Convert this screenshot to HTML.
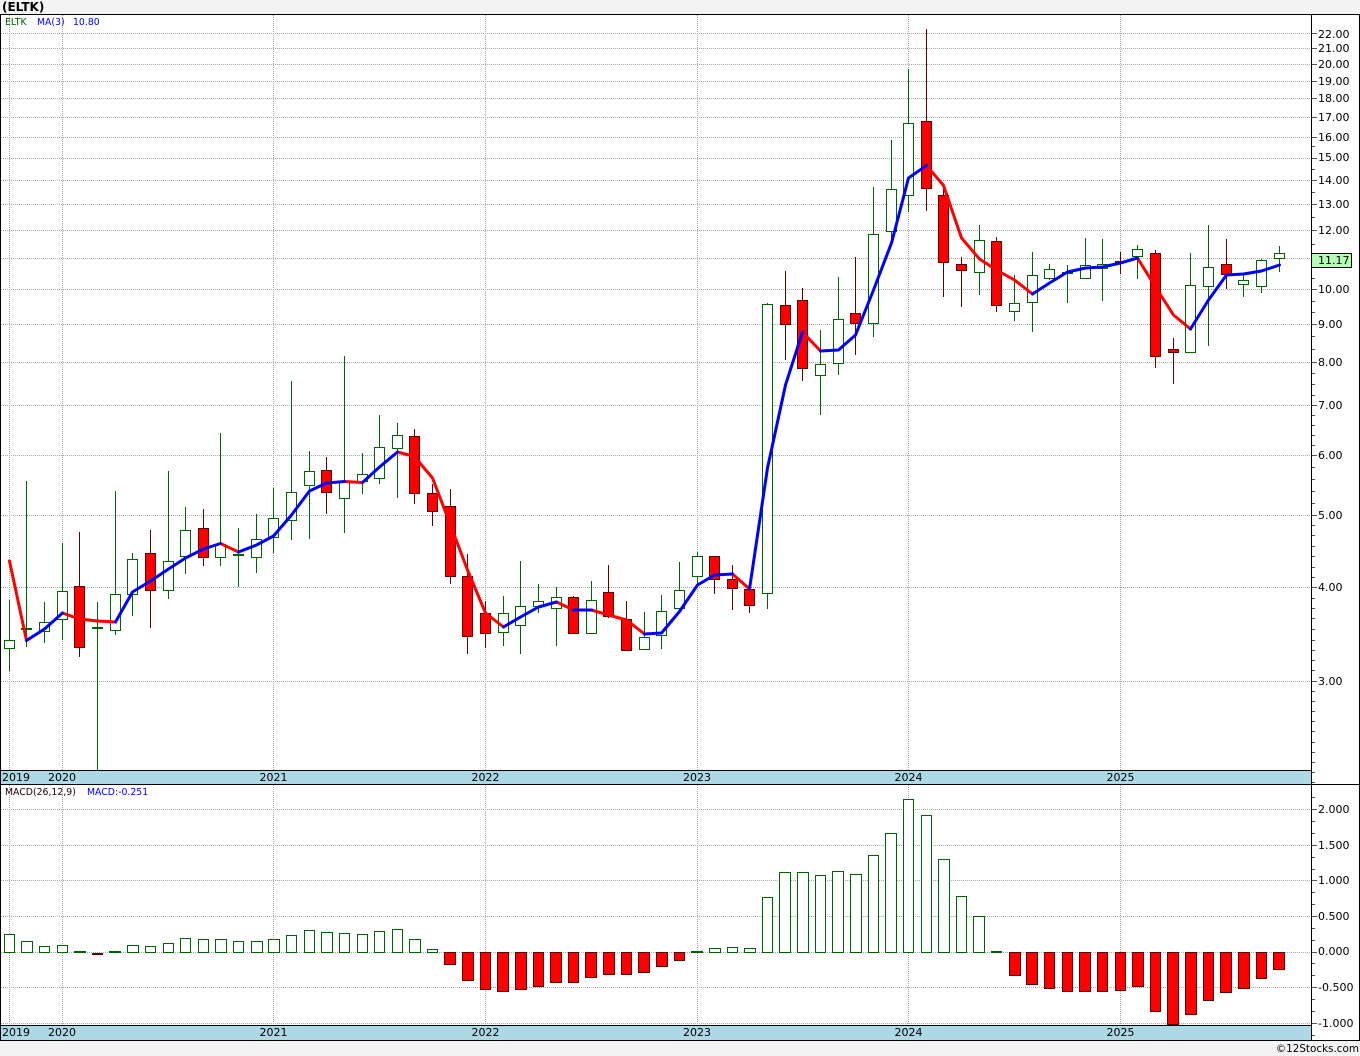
<!DOCTYPE html>
<html><head><meta charset="utf-8"><title>ELTK</title>
<style>
html,body{margin:0;padding:0;background:#f3f3f3;width:1360px;height:1056px;overflow:hidden}
svg{display:block}
text{font-family:"DejaVu Sans","Liberation Sans",sans-serif;fill:#000}
.ax{font-size:11px}
.sm{font-size:9.33px}
</style></head><body>
<svg width="1360" height="1056" viewBox="0 0 1360 1056" xmlns="http://www.w3.org/2000/svg">
<rect width="1360" height="1056" fill="#f3f3f3"/>
<rect x="0" y="14" width="1360" height="1027" fill="#fff"/>
<g shape-rendering="crispEdges">
<!-- grid -->
<path fill="none" stroke="#a8a8a8" stroke-dasharray="1 1" d="M1 33.5H1311M1 48.5H1311M1 64.5H1311M1 81.5H1311M1 98.5H1311M1 117.5H1311M1 137.5H1311M1 158.5H1311M1 180.5H1311M1 204.5H1311M1 230.5H1311M1 258.5H1311M1 289.5H1311M1 324.5H1311M1 362.5H1311M1 405.5H1311M1 455.5H1311M1 515.5H1311M1 587.5H1311M1 681.5H1311M1 809.5H1311M1 845.5H1311M1 880.5H1311M1 916.5H1311M1 952.5H1311M1 987.5H1311M1 1023.5H1311M9.5 15V770M62.5 15V770M273.5 15V770M485.5 15V770M697.5 15V770M908.5 15V770M1120.5 15V770M9.5 785V1025M62.5 785V1025M273.5 785V1025M485.5 785V1025M697.5 785V1025M908.5 785V1025M1120.5 785V1025"/>
<!-- bands -->
<rect x="1" y="770" width="1310" height="14" fill="#add8e6"/>
<rect x="1" y="1025" width="1310" height="15" fill="#add8e6"/>
<!-- green wicks -->
<path fill="none" stroke="#006400" d="M9.5 600V671M44.5 602V643M62.5 543V640M115.5 491V635M132.5 553V616M168.5 471V599M185.5 507V574M220.5 433V566M256.5 514V573M273.5 488V553M291.5 381V540M309.5 451V539M344.5 356V533M362.5 453V494M379.5 415V484M397.5 423V498M503.5 596V646M520.5 561V654M538.5 584V613M556.5 587V646M591.5 581V633M644.5 612V637M661.5 595V649M679.5 562V610M697.5 552V585M767.5 303V609M820.5 330V415M838.5 277V375M873.5 187V337M891.5 140V245M908.5 69V212M979.5 225V295M1014.5 275V321M1032.5 252V332M1049.5 264V280M1085.5 238V279M1102.5 239V301M1137.5 245V279M1190.5 253V352M1208.5 225V346M1243.5 275V297M1261.5 259V293M1279.5 246V272M26.5 481V647M97.5 602V771M238.5 528V587M1067.5 265V303"/>
<!-- red wicks -->
<path fill="none" stroke="#600000" d="M79.5 532V657M150.5 530V628M203.5 509V566M326.5 457V514M414.5 429V504M432.5 484V526M450.5 489V584M467.5 554V654M485.5 601V648M573.5 596V633M608.5 565V618M626.5 601V650M714.5 556V594M732.5 565V610M749.5 588V613M785.5 271V360M802.5 288V381M855.5 257V355M926.5 29V211M943.5 187V297M961.5 257V307M996.5 237V312M1155.5 250V368M1173.5 338V384M1226.5 239V289M1120.5 252V274"/>
<!-- green bodies -->
<path fill="#fff" stroke="#006400" d="M4.5 640.5h10v8h-10zM39.5 622.5h10v9h-10zM57.5 591.5h10v28h-10zM110.5 594.5h10v36h-10zM127.5 559.5h10v35h-10zM163.5 561.5h10v29h-10zM180.5 530.5h10v26h-10zM215.5 544.5h10v13h-10zM251.5 539.5h10v18h-10zM268.5 518.5h10v19h-10zM286.5 492.5h10v28h-10zM304.5 471.5h10v14h-10zM339.5 481.5h10v17h-10zM357.5 474.5h10v7h-10zM374.5 447.5h10v31h-10zM392.5 435.5h10v13h-10zM498.5 613.5h10v19h-10zM515.5 606.5h10v19h-10zM533.5 601.5h10v5h-10zM551.5 597.5h10v11h-10zM586.5 600.5h10v33h-10zM639.5 637.5h10v12h-10zM656.5 611.5h10v24h-10zM674.5 590.5h10v18h-10zM692.5 556.5h10v20h-10zM762.5 304.5h10v289h-10zM815.5 364.5h10v11h-10zM833.5 319.5h10v44h-10zM868.5 234.5h10v89h-10zM886.5 189.5h10v42h-10zM903.5 123.5h10v72h-10zM974.5 240.5h10v32h-10zM1009.5 303.5h10v8h-10zM1027.5 275.5h10v27h-10zM1044.5 269.5h10v9h-10zM1080.5 265.5h10v13h-10zM1097.5 264.5h10v4h-10zM1132.5 249.5h10v7h-10zM1185.5 285.5h10v67h-10zM1203.5 267.5h10v19h-10zM1238.5 280.5h10v4h-10zM1256.5 260.5h10v26h-10zM1274.5 253.5h10v5h-10z"/>
<!-- green doji -->
<path fill="#006400" d="M21 628h11v2h-11zM92 627h11v2h-11zM233 554h11v2h-11zM1062 272h11v2h-11z"/>
<!-- red bodies -->
<path fill="#f00" stroke="#600000" d="M74.5 586.5h10v61h-10zM145.5 553.5h10v37h-10zM198.5 528.5h10v29h-10zM321.5 470.5h10v22h-10zM409.5 436.5h10v57h-10zM427.5 493.5h10v18h-10zM445.5 506.5h10v70h-10zM462.5 576.5h10v60h-10zM480.5 613.5h10v20h-10zM568.5 597.5h10v36h-10zM603.5 592.5h10v24h-10zM621.5 619.5h10v31h-10zM709.5 556.5h10v23h-10zM727.5 579.5h10v9h-10zM744.5 589.5h10v16h-10zM780.5 305.5h10v19h-10zM797.5 300.5h10v68h-10zM850.5 313.5h10v10h-10zM921.5 121.5h10v67h-10zM938.5 195.5h10v67h-10zM956.5 264.5h10v6h-10zM991.5 241.5h10v64h-10zM1150.5 253.5h10v103h-10zM1168.5 349.5h10v3h-10zM1221.5 264.5h10v10h-10z"/>
<path fill="#600000" d="M1115 261h11v2h-11z"/>
<!-- MACD -->
<path fill="#fff" stroke="#006400" d="M4.5 934.5h10v18h-10zM21.5 941.5h11v11h-11zM39.5 946.5h10v6h-10zM57.5 945.5h10v7h-10zM127.5 945.5h11v7h-11zM145.5 946.5h10v6h-10zM163.5 943.5h10v9h-10zM180.5 938.5h10v14h-10zM198.5 939.5h10v13h-10zM215.5 939.5h11v13h-11zM233.5 941.5h10v11h-10zM251.5 941.5h11v11h-11zM268.5 939.5h11v13h-11zM286.5 935.5h10v17h-10zM304.5 930.5h10v22h-10zM321.5 932.5h11v20h-11zM339.5 933.5h10v19h-10zM357.5 934.5h10v18h-10zM374.5 931.5h10v21h-10zM392.5 929.5h10v23h-10zM409.5 939.5h11v13h-11zM427.5 949.5h10v3h-10zM709.5 948.5h11v4h-11zM727.5 947.5h10v5h-10zM744.5 948.5h11v4h-11zM762.5 897.5h10v55h-10zM779.5 872.5h11v80h-11zM797.5 872.5h11v80h-11zM815.5 875.5h10v77h-10zM832.5 871.5h11v81h-11zM850.5 874.5h11v78h-11zM868.5 855.5h10v97h-10zM885.5 833.5h11v119h-11zM903.5 799.5h10v153h-10zM921.5 815.5h10v137h-10zM938.5 859.5h11v93h-11zM956.5 896.5h10v56h-10zM973.5 916.5h11v36h-11z"/>
<path fill="#006400" d="M74 951h12v2h-12zM109 951h12v2h-12zM691 951h12v2h-12zM991 951h11v2h-11z"/>
<path fill="#600000" d="M92 953h11v2h-11z"/>
<path fill="#f00" stroke="#600000" d="M444.5 952.5h11v12h-11zM462.5 952.5h11v28h-11zM480.5 952.5h10v37h-10zM497.5 952.5h11v39h-11zM515.5 952.5h11v37h-11zM533.5 952.5h10v34h-10zM550.5 952.5h11v30h-11zM568.5 952.5h10v30h-10zM585.5 952.5h11v25h-11zM603.5 952.5h11v22h-11zM621.5 952.5h10v22h-10zM638.5 952.5h11v20h-11zM656.5 952.5h11v14h-11zM674.5 952.5h10v8h-10zM1009.5 952.5h11v23h-11zM1026.5 952.5h11v32h-11zM1044.5 952.5h10v36h-10zM1062.5 952.5h10v39h-10zM1079.5 952.5h11v39h-11zM1097.5 952.5h10v39h-10zM1115.5 952.5h10v38h-10zM1132.5 952.5h11v34h-11zM1150.5 952.5h10v59h-10zM1167.5 952.5h11v72h-11zM1185.5 952.5h11v62h-11zM1203.5 952.5h10v48h-10zM1220.5 952.5h11v40h-11zM1238.5 952.5h11v36h-11zM1256.5 952.5h10v26h-10zM1273.5 952.5h11v17h-11z"/>
<!-- frame -->
<path fill="none" stroke="#000" d="M0 14.5H1360M.5 14V1041M1311.5 14V1041M1359.5 14V1041M0 770.5H1311M0 784.5H1360M0 1025.5H1311M0 1040.5H1360"/>
<!-- ticks -->
<path fill="none" stroke="#555" d="M1312 33.5h5M1312 48.5h5M1312 64.5h5M1312 81.5h5M1312 98.5h5M1312 117.5h5M1312 137.5h5M1312 158.5h5M1312 180.5h5M1312 204.5h5M1312 230.5h5M1312 289.5h5M1312 324.5h5M1312 362.5h5M1312 405.5h5M1312 455.5h5M1312 515.5h5M1312 587.5h5M1312 681.5h5M1312 146.5h3M1312 169.5h3M1312 192.5h3M1312 217.5h3M1312 244.5h3M1312 278.5h3M1312 301.5h3M1312 312.5h3M1312 336.5h3M1312 349.5h3M1312 373.5h3M1312 384.5h3M1312 395.5h3M1312 415.5h3M1312 425.5h3M1312 435.5h3M1312 445.5h3M1312 467.5h3M1312 479.5h3M1312 491.5h3M1312 503.5h3M1312 525.5h3M1312 535.5h3M1312 546.5h3M1312 556.5h3M1312 567.5h3M1312 577.5h3M1312 598.5h3M1312 608.5h3M1312 618.5h3M1312 629.5h3M1312 640.5h3M1312 650.5h3M1312 660.5h3M1312 670.5h3M1312 691.5h3M1312 701.5h3M1312 711.5h3M1312 721.5h3M1312 731.5h3M1312 742.5h3M1312 752.5h3M1312 762.5h3M1312 772.5h3M1312 782.5h3M1312 809.5h5M1312 845.5h5M1312 880.5h5M1312 916.5h5M1312 952.5h5M1312 987.5h5M1312 1023.5h5M1312 797.5h3M1312 821.5h3M1312 833.5h3M1312 857.5h3M1312 869.5h3M1312 892.5h3M1312 904.5h3M1312 928.5h3M1312 940.5h3M1312 963.5h3M1312 975.5h3M1312 999.5h3M1312 1011.5h3M1312 1035.5h3"/>
</g>
<!-- moving average -->
<g fill="none" stroke-width="3" stroke-linejoin="round" stroke-linecap="round">
<g stroke="#ff0000">
<path d="M9.5 561L26.5 640.5"/>
<path d="M62.5 613L79.5 619L97.5 621L115.5 622"/>
<path d="M220.5 543.5L238.5 552"/>
<path d="M344.5 481.5L362.5 482.5"/>
<path d="M397.5 452L414.5 456.5L432.5 478L450.5 525L467.5 570L485.5 613L503.5 627"/>
<path d="M556.5 602L573.5 610"/>
<path d="M591.5 610L608.5 615L626.5 620L644.5 634"/>
<path d="M732.5 574L749.5 589"/>
<path d="M802.5 332L820.5 351"/>
<path d="M926.5 165.5L943.5 185.5L961.5 238L979.5 259L996.5 270L1014.5 280L1032.5 294"/>
<path d="M1137.5 258L1155.5 287L1173.5 315L1190.5 329"/>
</g>
<g stroke="#0000ff">
<path d="M26.5 640.5L44.5 629L62.5 613"/>
<path d="M115.5 622L132.5 592L150.5 581L168.5 569L185.5 558L203.5 549L220.5 543.5"/>
<path d="M238.5 552L256.5 545L273.5 536L291.5 515L309.5 491L326.5 483L344.5 481.5"/>
<path d="M362.5 482.5L379.5 467L397.5 452"/>
<path d="M503.5 627L520.5 617L538.5 607L556.5 602"/>
<path d="M573.5 610L591.5 610"/>
<path d="M644.5 634L661.5 633L679.5 611.5L697.5 585L714.5 575L732.5 574"/>
<path d="M749.5 589L767.5 468L785.5 385L802.5 332"/>
<path d="M820.5 351L838.5 350L855.5 335L873.5 290L891.5 243L908.5 178L926.5 165.5"/>
<path d="M1032.5 294L1049.5 283L1067.5 272L1085.5 268L1102.5 267L1120.5 263L1137.5 258"/>
<path d="M1190.5 329L1208.5 300L1226.5 275L1243.5 274L1261.5 271L1279.5 265"/>
</g>
</g>
<!-- price box -->
<rect x="1311.5" y="253.5" width="40" height="14" fill="#b4ffb4" stroke="#000" shape-rendering="crispEdges"/>
<text class="ax" x="1318" y="264">11.17</text>
<!-- text -->
<text x="2" y="11" style="font-size:12px;font-weight:bold">(ELTK)</text>
<text class="sm" x="5" y="25" style="fill:#006400">ELTK</text>
<text class="sm" x="37" y="25" style="fill:#0000ff">MA(3)</text>
<text class="sm" x="73" y="25" style="fill:#0000ff">10.80</text>
<text class="sm" x="5" y="795" style="fill:#200">MACD(26,12,9)</text>
<text class="sm" x="87" y="795" style="fill:#0000ff">MACD:-0.251</text>
<g class="ax">
<text x="1318" y="38">22.00</text><text x="1318" y="52">21.00</text><text x="1318" y="68">20.00</text><text x="1318" y="85">19.00</text><text x="1318" y="102">18.00</text><text x="1318" y="121">17.00</text><text x="1318" y="141">16.00</text><text x="1318" y="161">15.00</text><text x="1318" y="184">14.00</text><text x="1318" y="208">13.00</text><text x="1318" y="234">12.00</text><text x="1318" y="293">10.00</text><text x="1318" y="328">9.00</text><text x="1318" y="366">8.00</text><text x="1318" y="409">7.00</text><text x="1318" y="459">6.00</text><text x="1318" y="519">5.00</text><text x="1318" y="591">4.00</text><text x="1318" y="685">3.00</text>
<text x="1318" y="813">2.000</text><text x="1318" y="849">1.500</text><text x="1318" y="884">1.000</text><text x="1318" y="920">0.500</text><text x="1318" y="955">0.000</text><text x="1318" y="991">-0.500</text><text x="1318" y="1027">-1.000</text>
<text x="2" y="781">2019</text><text x="48" y="781">2020</text><text x="259.5" y="781">2021</text><text x="471.5" y="781">2022</text><text x="683" y="781">2023</text><text x="894.5" y="781">2024</text><text x="1106.5" y="781">2025</text>
<text x="2" y="1036">2019</text><text x="48" y="1036">2020</text><text x="259.5" y="1036">2021</text><text x="471.5" y="1036">2022</text><text x="683" y="1036">2023</text><text x="894.5" y="1036">2024</text><text x="1106.5" y="1036">2025</text>
</g>
<text x="1359" y="1052" text-anchor="end" style="font-size:10.4px">©12Stocks.com</text>
</svg>
</body></html>
